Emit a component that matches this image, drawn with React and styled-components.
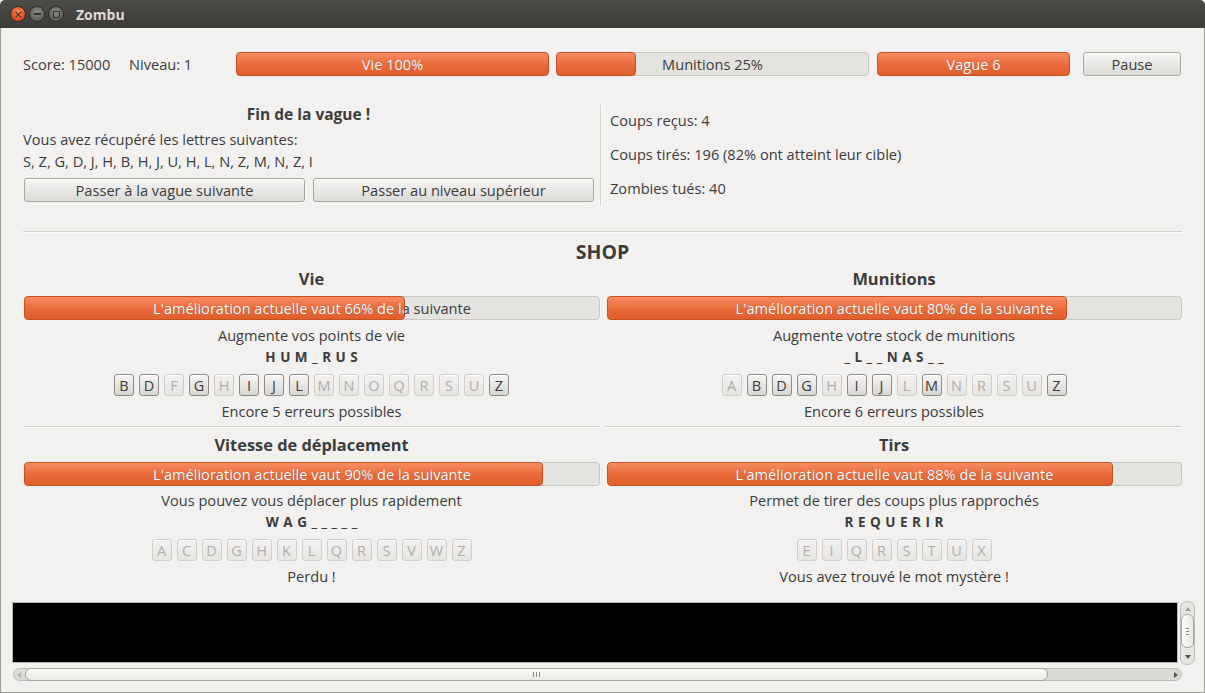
import React from 'react';
import styled, { createGlobalStyle } from 'styled-components';

const Global = createGlobalStyle`
  html, body { margin: 0; padding: 0; background: #f2f1f0; }
  body { font-family: "Open Sans", "DejaVu Sans", sans-serif; color: #3c3c3c; font-size: 14.6px; }
  * { box-sizing: border-box; }
`;

const Window = styled.div`
  width: 1205px;
  height: 693px;
  display: flex;
  flex-direction: column;
  background: #f2f1f0;
  overflow: hidden;
`;

const TitleBar = styled.div`
  height: 28px;
  flex: none;
  display: flex;
  align-items: center;
  padding-left: 10px;
  background: linear-gradient(#4d4c47, #3c3b37);
  border-radius: 5px 5px 0 0;
`;

const WinBtn = styled.div`
  width: 16px;
  height: 16px;
  border-radius: 50%;
  margin-right: 3px;
  display: flex;
  align-items: center;
  justify-content: center;
  background: ${p => (p.$close ? 'radial-gradient(circle at 50% 35%, #f68c61, #de4a1e 70%)' : 'radial-gradient(circle at 50% 35%, #8a8984, #5e5d58 75%)')};
  border: 1px solid #2e2d29;
  color: #2e2d2a;
  font-size: 11px;
  line-height: 1;
  font-family: "DejaVu Sans", sans-serif;
`;

const MinBar = styled.div`
  width: 7px;
  height: 2px;
  background: #33322e;
`;

const MaxBox = styled.div`
  width: 7px;
  height: 7px;
  border: 1.5px solid #33322e;
`;

const Title = styled.div`
  margin-left: 9px;
  color: #dfdbd2;
  font-weight: bold;
  font-size: 14px;
`;

const Body = styled.div`
  flex: 1;
  display: flex;
  flex-direction: column;
  border: 1px solid #9e9c97;
  border-top: none;
  padding: 0 22px;
`;

const TopRow = styled.div`
  margin-top: 24px;
  height: 24px;
  display: flex;
  align-items: center;
`;

const Stat = styled.div`
  width: ${p => p.$w}px;
  flex: none;
  line-height: 24px;
  white-space: nowrap;
`;

const Trough = styled.div`
  position: relative;
  width: ${p => (p.$w ? `${p.$w}px` : '100%')};
  margin-left: ${p => p.$ml || 0}px;
  height: 24px;
  flex: none;
  border: 1px solid #c9c7c2;
  border-radius: 4px;
  background: #e4e3e0;
`;

const Fill = styled.div`
  position: absolute;
  left: -1px;
  top: -1px;
  bottom: -1px;
  border: 1px solid #c8521f;
  border-radius: 4px;
  background: linear-gradient(#f78d63, #e8693a 55%, #e15f2e);
`;

const BarLabel = styled.div`
  position: relative;
  z-index: 1;
  line-height: 22px;
  text-align: center;
  color: #3c3c3c;
  white-space: nowrap;
`;

const BarLabelLight = styled(BarLabel)`
  position: absolute;
  inset: 0;
  z-index: 2;
  color: #ffffff;
`;

function Bar({ value, label, w, ml }) {
  return (
    <Trough $w={w} $ml={ml}>
      <Fill style={{ width: `calc(${value}% + 2px)` }} />
      <BarLabel>{label}</BarLabel>
      <BarLabelLight style={{ clipPath: `inset(0 ${100 - value}% 0 0)` }}>{label}</BarLabelLight>
    </Trough>
  );
}

const Button = styled.button`
  height: 24px;
  width: ${p => (p.$w ? `${p.$w}px` : 'auto')};
  flex: ${p => (p.$w ? 'none' : '1')};
  margin-left: ${p => p.$ml || 0}px;
  border: 1px solid #a9a6a0;
  border-radius: 3px;
  background: linear-gradient(#f7f6f5, #dddbd7);
  font-family: inherit;
  font-size: 14.6px;
  color: #3c3c3c;
  padding: 0;
  box-shadow: inset 0 1px 0 #ffffff;
`;

const TopPanel = styled.div`
  margin-top: 28px;
  display: flex;
`;

const LeftCol = styled.div`
  width: 571px;
  flex: none;
  display: flex;
  flex-direction: column;
`;

const PanelTitle = styled.div`
  font-weight: bold;
  font-size: 15.5px;
  line-height: 20px;
  text-align: center;
`;

const Line = styled.div`
  line-height: 20px;
  margin-top: ${p => p.$mt || 0}px;
  white-space: nowrap;
`;

const ButtonRow = styled.div`
  display: flex;
  gap: 8px;
  margin-top: 7px;
  padding-left: 1px;
`;

const VSep = styled.div`
  width: 2px;
  margin: 1px 0 0 6px;
  height: 101px;
  border-left: 1px solid #d3d1cc;
  border-right: 1px solid #fbfbfa;
`;

const RightCol = styled.div`
  padding-left: 8px;
  padding-top: 6px;
  display: flex;
  flex-direction: column;
  gap: 14px;
`;

const HSep = styled.div`
  height: 2px;
  margin-top: ${p => p.$mt || 0}px;
  border-top: 1px solid #d3d1cc;
  border-bottom: 1px solid #fbfbfa;
`;

const ShopTitle = styled.div`
  margin-top: 7px;
  font-weight: bold;
  font-size: 19.5px;
  line-height: 24px;
  text-align: center;
`;

const ShopGrid = styled.div`
  margin-top: 5px;
  display: grid;
  grid-template-columns: 577px 576px;
  column-gap: 6px;
`;

const Cell = styled.div`
  display: flex;
  flex-direction: column;
  align-items: stretch;
  padding-top: ${p => p.$pt || 0}px;
`;

const CellTitle = styled.div`
  font-weight: bold;
  font-size: 16.4px;
  line-height: 20px;
  text-align: center;
  margin-bottom: 7px;
`;

const BarWrap = styled.div`
  padding-left: ${p => p.$pl || 0}px;
`;

const CenterLine = styled.div`
  line-height: 20px;
  text-align: center;
  margin-top: ${p => p.$mt || 0}px;
  white-space: nowrap;
`;

const Word = styled.div`
  margin-top: 2px;
  line-height: 20px;
  text-align: center;
  font-weight: bold;
  font-size: 13.5px;
  letter-spacing: 4.5px;
  padding-left: 4.5px;
`;

const Letters = styled.div`
  margin-top: 7px;
  display: flex;
  justify-content: center;
  gap: 5px;
`;

const Key = styled.div`
  width: 20px;
  height: 22px;
  border-radius: 3px;
  display: flex;
  align-items: center;
  justify-content: center;
  font-size: 14.5px;
  border: 1px solid ${p => (p.$on ? '#8e8b86' : '#d0ceca')};
  background: ${p => (p.$on ? 'linear-gradient(#f6f5f4, #d9d7d3)' : 'linear-gradient(#f3f2f1, #e6e5e2)')};
  color: ${p => (p.$on ? '#3c3c3c' : '#b0aeaa')};
  box-shadow: inset 0 1px 0 #ffffff;
`;

const CellSep = styled.div`
  margin-top: 5px;
  height: 2px;
  border-top: 1px solid #d3d1cc;
  border-bottom: 1px solid #fbfbfa;
`;

const Console = styled.div`
  margin: 16px -13px 0 -11px;
  display: flex;
  flex-direction: column;
`;

const ConsoleRow = styled.div`
  display: flex;
  align-items: flex-start;
`;

const Black = styled.div`
  flex: 1;
  height: 61px;
  background: #000;
  border: 1px solid #b9b7b2;
`;

const VScroll = styled.div`
  width: 15px;
  height: 64px;
  margin-left: 2px;
  margin-top: -1px;
  border: 1px solid #bdbbb6;
  border-radius: 7px;
  background: #e6e5e2;
  display: flex;
  flex-direction: column;
  align-items: center;
`;

const Arrow = styled.div`
  width: 0;
  height: 0;
  border-left: 3px solid transparent;
  border-right: 3px solid transparent;
  ${p => (p.$dir === 'up' ? 'border-bottom: 4px solid #9f9d98;' : '')}
  ${p => (p.$dir === 'down' ? 'border-top: 4px solid #55534f;' : '')}
`;

const ArrowH = styled.div`
  width: 0;
  height: 0;
  border-top: 3px solid transparent;
  border-bottom: 3px solid transparent;
  ${p => (p.$dir === 'left' ? 'border-right: 4px solid #b5b3ae;' : 'border-left: 4px solid #55534f;')}
`;

const ArrowGap = styled.div`
  height: 5px;
  flex: none;
`;

const VThumb = styled.div`
  width: 13px;
  height: 34px;
  margin: 3px 0;
  border: 1px solid #a8a6a1;
  border-radius: 6px;
  background: linear-gradient(90deg, #fbfbfa, #e9e8e5);
  display: flex;
  flex-direction: column;
  align-items: center;
  justify-content: center;
  gap: 2px;
`;

const GripH = styled.div`
  width: 3px;
  height: 1px;
  background: #8a8883;
`;

const HScroll = styled.div`
  margin-top: 3px;
  margin-left: 1px;
  margin-right: 13px;
  height: 13px;
  border: 1px solid #bdbbb6;
  border-radius: 7px;
  background: #dcdbd8;
  display: flex;
  align-items: center;
  padding: 0 3px;
`;

const HThumb = styled.div`
  width: 1023px;
  height: 13px;
  margin-left: 4px;
  border: 1px solid #a8a6a1;
  border-radius: 6px;
  background: linear-gradient(#fbfbfa, #e9e8e5);
  display: flex;
  align-items: center;
  justify-content: center;
  gap: 2px;
`;

const GripV = styled.div`
  width: 1px;
  height: 5px;
  background: #8a8883;
`;

const HSpacer = styled.div`
  flex: 1;
`;

const shop = [
  {
    title: 'Vie', value: 66, desc: 'Augmente vos points de vie', word: 'HUM_RUS',
    keys: [['B', 1], ['D', 1], ['F', 0], ['G', 1], ['H', 0], ['I', 1], ['J', 1], ['L', 1], ['M', 0], ['N', 0], ['O', 0], ['Q', 0], ['R', 0], ['S', 0], ['U', 0], ['Z', 1]],
    status: 'Encore 5 erreurs possibles', pl: 1,
  },
  {
    title: 'Munitions', value: 80, desc: 'Augmente votre stock de munitions', word: '_L__NAS__',
    keys: [['A', 0], ['B', 1], ['D', 1], ['G', 1], ['H', 0], ['I', 1], ['J', 1], ['L', 0], ['M', 1], ['N', 0], ['R', 0], ['S', 0], ['U', 0], ['Z', 1]],
    status: 'Encore 6 erreurs possibles', pl: 1,
  },
  {
    title: 'Vitesse de déplacement', value: 90, desc: 'Vous pouvez vous déplacer plus rapidement', word: 'WAG_____',
    keys: 'ACDGHKLQRSVWZ'.split('').map(l => [l, 0]),
    status: 'Perdu !', pl: 1,
  },
  {
    title: 'Tirs', value: 88, desc: 'Permet de tirer des coups plus rapprochés', word: 'REQUERIR',
    keys: 'EIQRSTUX'.split('').map(l => [l, 0]),
    status: 'Vous avez trouvé le mot mystère !', pl: 1,
  },
];

function ShopCell({ item, first }) {
  return (
    <Cell $pt={first ? 0 : 7}>
      <CellTitle>{item.title}</CellTitle>
      <BarWrap $pl={item.pl}>
        <Bar value={item.value} label={`L'amélioration actuelle vaut ${item.value}% de la suivante`} />
      </BarWrap>
      <CenterLine $mt={first ? 5 : 4}>{item.desc}</CenterLine>
      <Word>{item.word}</Word>
      <Letters>
        {item.keys.map(([l, on], i) => (
          <Key key={i} $on={!!on}>{l}</Key>
        ))}
      </Letters>
      <CenterLine $mt={5}>{item.status}</CenterLine>
      {first && <CellSep />}
    </Cell>
  );
}

export default function App() {
  return (
    <>
      <Global />
      <Window>
        <TitleBar>
          <WinBtn $close>×</WinBtn>
          <WinBtn><MinBar /></WinBtn>
          <WinBtn><MaxBox /></WinBtn>
          <Title>Zombu</Title>
        </TitleBar>
        <Body>
          <TopRow>
            <Stat $w={106}>Score: 15000</Stat>
            <Stat $w={107}>Niveau: 1</Stat>
            <Bar w={313} value={100} label="Vie 100%" />
            <Bar w={313} ml={7} value={25} label="Munitions 25%" />
            <Bar w={193} ml={8} value={100} label="Vague 6" />
            <Button $w={98} $ml={13}>Pause</Button>
          </TopRow>
          <TopPanel>
            <LeftCol>
              <PanelTitle>Fin de la vague !</PanelTitle>
              <Line $mt={5}>Vous avez récupéré les lettres suivantes:</Line>
              <Line $mt={2}>S, Z, G, D, J, H, B, H, J, U, H, L, N, Z, M, N, Z, I</Line>
              <ButtonRow>
                <Button>Passer à la vague suivante</Button>
                <Button>Passer au niveau supérieur</Button>
              </ButtonRow>
            </LeftCol>
            <VSep />
            <RightCol>
              <Line>Coups reçus: 4</Line>
              <Line>Coups tirés: 196 (82% ont atteint leur cible)</Line>
              <Line>Zombies tués: 40</Line>
            </RightCol>
          </TopPanel>
          <HSep $mt={25} />
          <ShopTitle>SHOP</ShopTitle>
          <ShopGrid>
            <ShopCell item={shop[0]} first />
            <ShopCell item={shop[1]} first />
            <ShopCell item={shop[2]} />
            <ShopCell item={shop[3]} />
          </ShopGrid>
          <Console>
            <ConsoleRow>
              <Black />
              <VScroll>
                <ArrowGap />
                <Arrow $dir="up" />
                <VThumb>
                  <GripH /><GripH /><GripH />
                </VThumb>
                <HSpacer />
                <Arrow $dir="down" />
                <ArrowGap />
              </VScroll>
            </ConsoleRow>
            <HScroll>
              <ArrowH $dir="left" />
              <HThumb>
                <GripV /><GripV /><GripV />
              </HThumb>
              <HSpacer />
              <ArrowH $dir="right" />
            </HScroll>
          </Console>
        </Body>
      </Window>
    </>
  );
}
